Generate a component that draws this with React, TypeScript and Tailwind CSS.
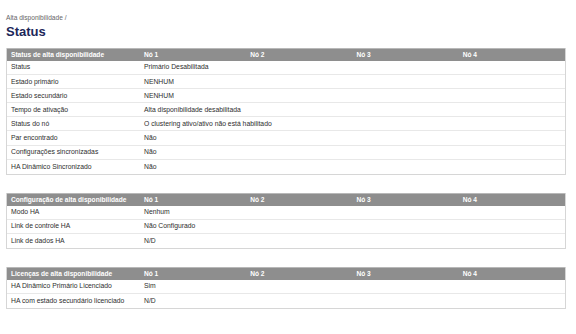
const tables = [
  {
    titulo: "Status de alta disponibilidade",
    linhas: [
      ["Status", "Primário Desabilitada"],
      ["Estado primário", "NENHUM"],
      ["Estado secundário", "NENHUM"],
      ["Tempo de ativação", "Alta disponibilidade desabilitada"],
      ["Status do nó", "O clustering ativo/ativo não está habilitado"],
      ["Par encontrado", "Não"],
      ["Configurações sincronizadas", "Não"],
      ["HA Dinâmico Sincronizado", "Não"],
    ],
  },
  {
    titulo: "Configuração de alta disponibilidade",
    linhas: [
      ["Modo HA", "Nenhum"],
      ["Link de controle HA", "Não Configurado"],
      ["Link de dados HA", "N/D"],
    ],
  },
  {
    titulo: "Licenças de alta disponibilidade",
    linhas: [
      ["HA Dinâmico Primário Licenciado", "Sim"],
      ["HA com estado secundário licenciado", "N/D"],
    ],
  },
];

const Tabela = ({ titulo, linhas }: { titulo: string; linhas: string[][] }) => (
  <div className="border-x border-b border-[#d6d6d6]">
    <div className="grid grid-cols-[133px_1fr_1fr_1fr_1fr] h-[13px] items-center bg-[#8e8e8e] border-t border-[#b8b8b8] text-white font-bold text-[6.6px] whitespace-nowrap">
      <div className="pl-[4px]">{titulo}</div>
      <div className="pl-[4px]">Nó 1</div>
      <div className="pl-[4px]">Nó 2</div>
      <div className="pl-[4px]">Nó 3</div>
      <div className="pl-[4px]">Nó 4</div>
    </div>
    {linhas.map(([label, valor], i) => (
      <div
        key={i}
        className={`grid grid-cols-[133px_1fr_1fr_1fr_1fr] h-[14.1px] items-center text-[6.8px] text-[#2e2e2e] whitespace-nowrap ${i < linhas.length - 1 ? "border-b border-[#e8e8e8]" : ""}`}
      >
        <div className="pl-[4px]">{label}</div>
        <div className="pl-[4px]">{valor}</div>
        <div></div>
        <div></div>
        <div></div>
      </div>
    ))}
  </div>
);

export default function App() {
  return (
    <div className="w-[576px] h-[334px] bg-white px-[6px] pt-[14px] overflow-hidden font-['Liberation_Sans',Arial,sans-serif]">
      <div className="text-[6.6px] text-[#666] leading-[8px]">Alta disponibilidade /</div>
      <h1 className="text-[13px] font-bold text-[#1c2759] leading-[16px] mt-[2px]">Status</h1>
      <div className="mt-[8px] flex flex-col gap-[18px] w-[560px]">
        {tables.map((t, i) => (
          <Tabela key={i} titulo={t.titulo} linhas={t.linhas} />
        ))}
      </div>
    </div>
  );
}
